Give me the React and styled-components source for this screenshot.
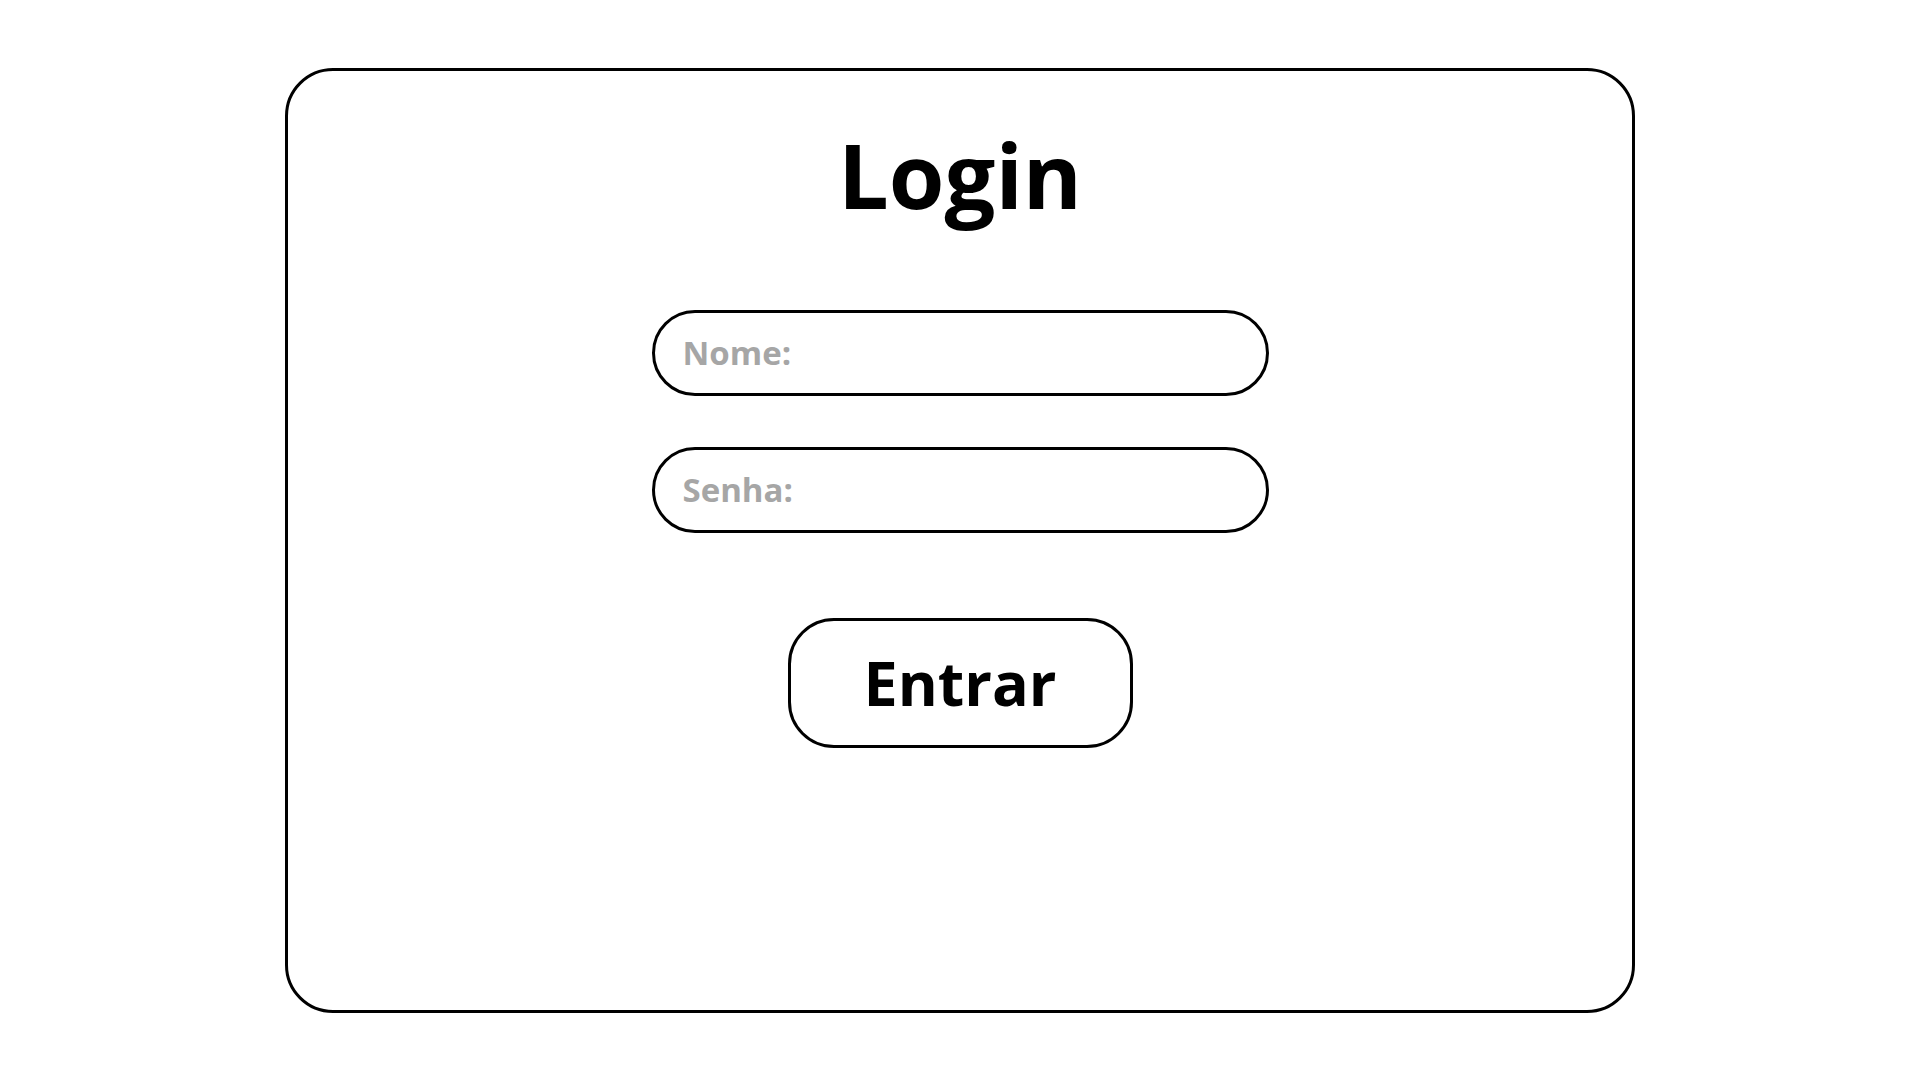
import React from "react";
import styled, { createGlobalStyle } from "styled-components";

const Global = createGlobalStyle`
  html, body { margin: 0; padding: 0; background: #ffffff; }
  * { box-sizing: border-box; }
  body { font-family: "Open Sans", "Noto Sans", sans-serif; }
`;

const Page = styled.div`
  width: 100vw;
  height: 100vh;
  display: flex;
  align-items: center;
  justify-content: center;
`;

const Card = styled.form`
  width: 1350px;
  height: 945px;
  border: 3px solid #000;
  border-radius: 48px;
  background: #fff;
  display: flex;
  flex-direction: column;
  align-items: center;
  padding-top: 42px;
`;

const Title = styled.h1`
  margin: 0 0 75px;
  font-family: "Open Sans", sans-serif;
  font-weight: 700;
  font-size: 90px;
  line-height: normal;
  color: #000;
`;

const Field = styled.input`
  width: 617px;
  height: 86px;
  border: 3px solid #000;
  border-radius: 43px;
  padding: 0 28px;
  margin-bottom: ${(p) => p.$gap}px;
  font-family: "Open Sans", sans-serif;
  font-weight: 700;
  font-size: 33px;
  color: #000;
  background: #fff;
  outline: none;
  &::placeholder { color: #a6a6a6; opacity: 1; }
`;

const Button = styled.button`
  width: 345px;
  height: 130px;
  border: 3px solid #000;
  border-radius: 46px;
  background: #fff;
  font-family: "Open Sans", sans-serif;
  font-weight: 700;
  font-size: 61px;
  color: #000;
  cursor: pointer;
  padding: 0;
`;

export default function App() {
  return (
    <Page>
      <Global />
      <Card onSubmit={(e) => e.preventDefault()}>
        <Title>Login</Title>
        <Field type="text" placeholder="Nome:" $gap={51} />
        <Field type="password" placeholder="Senha:" $gap={85} />
        <Button type="submit">Entrar</Button>
      </Card>
    </Page>
  );
}
